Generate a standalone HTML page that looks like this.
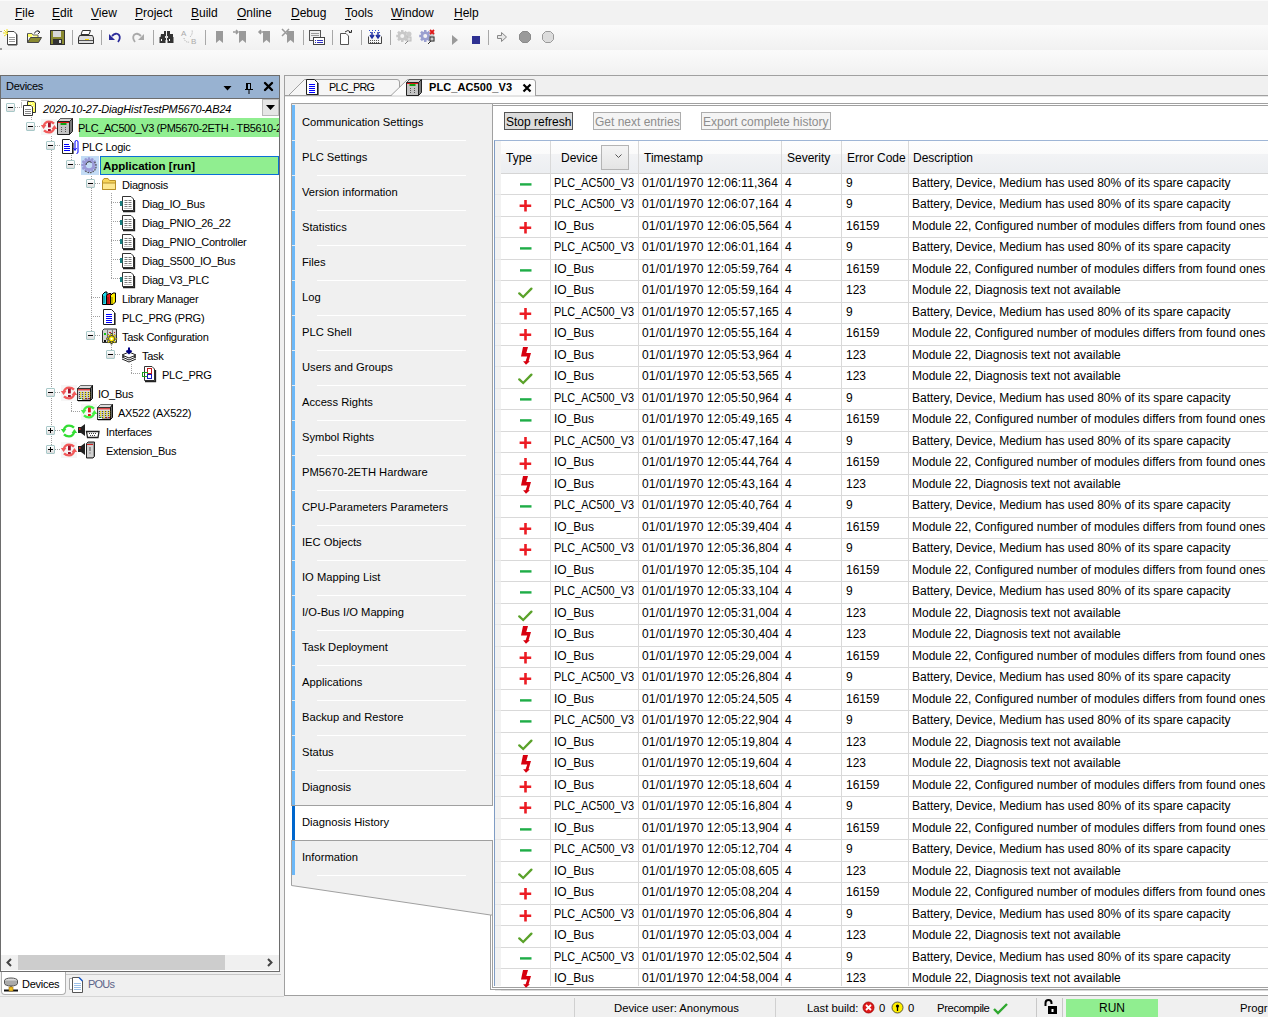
<!DOCTYPE html>
<html><head><meta charset="utf-8"><style>
*{margin:0;padding:0;box-sizing:border-box}
html,body{width:1268px;height:1017px;overflow:hidden;background:#f0f0f0;font-family:"Liberation Sans",sans-serif;color:#000}
.abs{position:absolute}
#menu{position:absolute;left:0;top:0;width:1268px;height:25px;background:#f2f2f2;border-top:1px solid #fafafa}
#menu span{position:absolute;top:5px;font-size:12px}
#menu span u{text-decoration:underline;text-underline-offset:2px}
#tb1{position:absolute;left:0;top:25px;width:1268px;height:25px;background:linear-gradient(#fbfbfb,#f1f1f1)}
#tb2{position:absolute;left:0;top:50px;width:1268px;height:25px;background:linear-gradient(#fbfbfb,#f1f1f1)}
.sep{position:absolute;top:30px;width:1px;height:15px;background:#a8a8a8}
.ic{position:absolute;overflow:visible}
#dev{position:absolute;left:0;top:75px;width:280px;height:897px;border:1px solid #6d6d6d;background:#fff;overflow:hidden}
#devhdr{position:absolute;left:0;top:0;width:278px;height:23px;background:#98b2d1;border-bottom:1px solid #6d6d6d}
#devhdr span{position:absolute;left:5px;top:4px;font-size:11px;letter-spacing:-0.3px}
.tt{position:absolute;font-size:11px;line-height:19px;white-space:nowrap;color:#000;letter-spacing:-0.25px}
.tt.it{font-style:italic;letter-spacing:-0.15px}
.tt.bd{font-weight:bold;font-size:11.5px;letter-spacing:0}
.dv{position:absolute;width:1px;background:repeating-linear-gradient(#a0a0a0 0 1px,transparent 1px 2px)}
.dh{position:absolute;height:1px;background:repeating-linear-gradient(90deg,#a0a0a0 0 1px,transparent 1px 2px)}
.exp{position:absolute;width:9px;height:9px;border:1px solid #a8c8c8;background:linear-gradient(#fff,#ddd);border-radius:1px}
.exp i{position:absolute;left:1px;top:3px;width:5px;height:1px;background:#000}
.exp em{position:absolute;left:3px;top:1px;width:1px;height:5px;background:#000}
#editor{position:absolute;left:284px;top:75px;width:990px;height:921px;border:1px solid #a0a0a0;background:#fff}
#tabstrip{position:absolute;left:285px;top:76px;width:990px;height:20px;background:#f0f0f0;border-bottom:1px solid #a0a0a0}
.st{position:absolute;left:302px;font-size:11.2px;white-space:nowrap;line-height:13px}
.si b{position:absolute;left:1px;top:0;width:3px;height:35px;background:#6cb8f8}
.si span{position:absolute;left:11px;top:10px;font-size:11.2px;white-space:nowrap}
.si u{position:absolute;left:26px;top:35px;width:150px;height:1px;background:#fff}
.si.sel{background:#fff;border-top:1px solid #a0a0a0;border-bottom:1px solid #a0a0a0;width:203px}
.si.sel b{background:#0066cc;top:-1px}
.si.sel span{top:9px}
.tr{position:absolute;left:0;top:0;width:1268px;height:21.5px}
.tr span{position:absolute;top:2px;font-size:12px;white-space:nowrap}
.hl{position:absolute;left:501px;width:780px;height:1px;background:#d9d9d9}
.hl2{position:absolute;left:495px;width:6px;height:1px;background:#e6e6e6}
.vl{position:absolute;top:141px;width:1px;height:845px;background:#d9d9d9}
.hd{position:absolute;top:151px;font-size:12px;white-space:nowrap}
#status span{position:absolute;top:1002px;font-size:11.3px;white-space:nowrap}
.btn{position:absolute;top:112px;height:18px;font-size:12px;padding:2px 1px 0 1px;line-height:14px;white-space:nowrap;border:1px solid #adadad;color:#8d8d8d;background:#f4f4f4}
</style></head><body>
<div id="menu">
<span style="left:15px"><u>F</u>ile</span>
<span style="left:52px"><u>E</u>dit</span>
<span style="left:91px"><u>V</u>iew</span>
<span style="left:135px"><u>P</u>roject</span>
<span style="left:191px"><u>B</u>uild</span>
<span style="left:237px"><u>O</u>nline</span>
<span style="left:291px"><u>D</u>ebug</span>
<span style="left:345px"><u>T</u>ools</span>
<span style="left:391px"><u>W</u>indow</span>
<span style="left:454px"><u>H</u>elp</span>
</div>
<div id="tb1"></div>
<div id="tb2"></div>
<!-- toolbar icons placeholder -->
<svg class="ic" style="left:3px;top:29px" width="16" height="17" viewBox="0 0 16 17"><path d="M4.5 2.5H11L13.5 5V15.5H4.5Z" fill="#fff" stroke="#444"/><path d="M5 16H14V5.5" stroke="#444" fill="none"/><path d="M6 8.5h6M6 10.5h6M6 12.5h6" stroke="#999"/><path d="M1 1L5 5M4 0v4M0 4h4M1 7l3-2" stroke="#f0e020" stroke-width="1"/></svg>
<svg class="ic" style="left:26px;top:29px" width="16" height="16" viewBox="0 0 16 16"><path d="M1.5 4.5H6L7 6H12V9" fill="#ffff80" stroke="#666"/><path d="M1.5 4.5V13.5H12.5L15.5 8.5H4.5L1.5 13.5" fill="#8a8a30" stroke="#444"/><path d="M2 5h4v3h-4z" fill="#ffff66"/><path d="M8.5 4.5 Q9.5 1 13 2.5" stroke="#333" fill="none"/><path d="M11.5 1.5L14 3L12 5" stroke="#333" fill="none"/></svg>
<svg class="ic" style="left:50px;top:30px" width="15" height="15" viewBox="0 0 15 15"><rect x="0.5" y="0.5" width="14" height="14" fill="#8a8a30" stroke="#333"/><rect x="3" y="1" width="8" height="6" fill="#d8d8d8"/><rect x="3" y="9" width="9" height="5" fill="#333"/><rect x="9" y="10" width="2" height="3" fill="#ddd"/></svg>
<svg class="ic" style="left:78px;top:30px" width="16" height="15" viewBox="0 0 16 15"><path d="M4.5 0.5H12.5L11 4.5H3Z" fill="#fff" stroke="#333"/><path d="M1.5 5.5H14.5L15.5 8V13.5H0.5V8Z" fill="#ddd" stroke="#333"/><path d="M1 10.5H15" stroke="#555"/><rect x="7" y="9" width="4" height="1" fill="#f0d000"/></svg>
<svg class="ic" style="left:108px;top:31px" width="14" height="13" viewBox="0 0 14 13"><path d="M4 5 Q8 1 11 4 Q13 7 10 11" stroke="#2b2b9a" stroke-width="1.8" fill="none"/><path d="M1 3V9H7Z" fill="#2b2b9a"/></svg>
<svg class="ic" style="left:131px;top:31px" width="14" height="13" viewBox="0 0 14 13"><path d="M10 5 Q6 1 3 4 Q1 7 4 11" stroke="#aaa" stroke-width="1.8" fill="none"/><path d="M13 3V9H7Z" fill="#aaa"/></svg>
<svg class="ic" style="left:159px;top:30px" width="15" height="14" viewBox="0 0 15 14"><path d="M2 4h3v-3h2v9h-6z M9 1h2v3h3v6h-6v-9z" fill="#333"/><rect x="0.5" y="7" width="6" height="6" fill="#333"/><rect x="8.5" y="7" width="6" height="6" fill="#333"/><rect x="2" y="9" width="1" height="2" fill="#fff"/><rect x="10" y="9" width="1" height="2" fill="#fff"/><rect x="6" y="6" width="3" height="2" fill="#ddd"/></svg>
<svg class="ic" style="left:181px;top:29px" width="17" height="16" viewBox="0 0 17 16"><text x="0" y="7" font-size="8" fill="#aaa" font-family="Liberation Sans">A</text><text x="10" y="15" font-size="8" fill="#aaa" font-family="Liberation Sans">B</text><path d="M3 9 Q4 14 9 13 M9 8 Q12 5 11 1" stroke="#aaa" stroke-dasharray="1 1" fill="none"/></svg>
<svg class="ic" style="left:212px;top:29px" width="15" height="16" viewBox="0 0 15 16"><path d="M4 2H11V14L7.5 11L4 14Z" fill="#9a9a9a"/></svg>
<svg class="ic" style="left:233px;top:28px" width="15" height="16" viewBox="0 0 15 16"><path d="M6 3H13V15L9.5 12L6 15Z" fill="#9a9a9a"/><path d="M0 4H5M3 2L5 4L3 6" stroke="#9a9a9a" stroke-width="1.5" fill="none"/></svg>
<svg class="ic" style="left:257px;top:28px" width="15" height="16" viewBox="0 0 15 16"><path d="M6 3H13V15L9.5 12L6 15Z" fill="#9a9a9a"/><path d="M8 4H2M4 2L2 4L4 6" stroke="#9a9a9a" stroke-width="1.5" fill="none"/></svg>
<svg class="ic" style="left:281px;top:28px" width="15" height="16" viewBox="0 0 15 16"><path d="M6 3H13V15L9.5 12L6 15Z" fill="#9a9a9a"/><path d="M1 1L8 8M8 1L1 8" stroke="#9a9a9a" stroke-width="1.5" fill="none"/></svg>
<svg class="ic" style="left:309px;top:29px" width="16" height="16" viewBox="0 0 16 16"><rect x="0.5" y="1.5" width="11" height="10" fill="#eee" stroke="#555"/><path d="M2 4.5h8M2 6.5h8" stroke="#999"/><rect x="4.5" y="8.5" width="11" height="7" fill="#fff" stroke="#444"/><path d="M6 11.5h1M8 11.5h6M6 13.5h1M8 13.5h6" stroke="#3030c0"/></svg>
<svg class="ic" style="left:339px;top:29px" width="14" height="16" viewBox="0 0 14 16"><path d="M1.5 4.5H7L9.5 7V15.5H1.5Z" fill="#fff" stroke="#555"/><path d="M6 3 Q9 0 11.5 3" stroke="#333" fill="none"/><path d="M10 3.5h2.5v-2.5" stroke="#333" fill="none"/></svg>
<svg class="ic" style="left:367px;top:29px" width="16" height="16" viewBox="0 0 16 16"><path d="M1.5 7.5V14.5H14.5V7.5" fill="none" stroke="#444"/><path d="M3 11.5h1M5 11.5h1M7 11.5h1M9 11.5h1M11 11.5h1M3 13.5h1M5 13.5h1M7 13.5h1M9 13.5h1M11 13.5h1" stroke="#555"/><path d="M2 1.5h1M5 1.5h1M8 1.5h1M11 1.5h1M3 3.5h1M7 3.5h1M12 3.5h1" stroke="#3050d0"/><path d="M5 3v5M3 6l2 3l2-3M11 3v5M9 6l2 3l2-3" stroke="#2030a0" stroke-width="1.5" fill="none"/></svg>
<svg class="ic" style="left:396px;top:29px" width="16" height="16" viewBox="0 0 16 16"><rect x="5" y="1" width="2.5" height="3" fill="#c8c8c8" transform="rotate(0 6.25 7)"/><rect x="5" y="1" width="2.5" height="3" fill="#c8c8c8" transform="rotate(45 6.25 7)"/><rect x="5" y="1" width="2.5" height="3" fill="#c8c8c8" transform="rotate(90 6.25 7)"/><rect x="5" y="1" width="2.5" height="3" fill="#c8c8c8" transform="rotate(135 6.25 7)"/><rect x="5" y="1" width="2.5" height="3" fill="#c8c8c8" transform="rotate(180 6.25 7)"/><rect x="5" y="1" width="2.5" height="3" fill="#c8c8c8" transform="rotate(225 6.25 7)"/><rect x="5" y="1" width="2.5" height="3" fill="#c8c8c8" transform="rotate(270 6.25 7)"/><rect x="5" y="1" width="2.5" height="3" fill="#c8c8c8" transform="rotate(315 6.25 7)"/><circle cx="6.25" cy="7" r="4.6" fill="#c8c8c8"/><circle cx="6.25" cy="7" r="2" fill="#f4f4f4"/><circle cx="13" cy="5" r="2.5" fill="#ccc"/><rect x="11" y="8" width="4" height="4" fill="#ddd" stroke="#bbb"/><path d="M9 15L12 12" stroke="#888"/></svg>
<svg class="ic" style="left:419px;top:29px" width="16" height="16" viewBox="0 0 16 16"><rect x="5" y="1" width="2.5" height="3" fill="#9a9fd0" transform="rotate(0 6.25 7)"/><rect x="5" y="1" width="2.5" height="3" fill="#9a9fd0" transform="rotate(45 6.25 7)"/><rect x="5" y="1" width="2.5" height="3" fill="#9a9fd0" transform="rotate(90 6.25 7)"/><rect x="5" y="1" width="2.5" height="3" fill="#9a9fd0" transform="rotate(135 6.25 7)"/><rect x="5" y="1" width="2.5" height="3" fill="#9a9fd0" transform="rotate(180 6.25 7)"/><rect x="5" y="1" width="2.5" height="3" fill="#9a9fd0" transform="rotate(225 6.25 7)"/><rect x="5" y="1" width="2.5" height="3" fill="#9a9fd0" transform="rotate(270 6.25 7)"/><rect x="5" y="1" width="2.5" height="3" fill="#9a9fd0" transform="rotate(315 6.25 7)"/><circle cx="6.25" cy="7" r="4.6" fill="#9a9fd0"/><circle cx="6.25" cy="7" r="2" fill="#f4f4f4"/><circle cx="13" cy="5" r="2.5" fill="#ccc"/><rect x="11" y="8" width="4" height="4" fill="#ddd" stroke="#bbb"/><path d="M9 15L12 12" stroke="#888"/><path d="M11 1L15 5M15 1L11 5" stroke="#e01818" stroke-width="1.8"/><rect x="11" y="8" width="4" height="4" fill="#ccc" stroke="#333"/><path d="M9 15L12 12" stroke="#333"/></svg>
<svg class="ic" style="left:452px;top:35px" width="6" height="10" viewBox="0 0 6 10"><path d="M0 0L6 5L0 10Z" fill="#9a9a9a"/></svg>
<svg class="ic" style="left:472px;top:36px" width="9" height="9" viewBox="0 0 9 9"><rect width="8" height="8" fill="#2e3192"/></svg>
<svg class="ic" style="left:497px;top:32px" width="10" height="10" viewBox="0 0 10 10"><path d="M0.5 3.5H4.5V0.5L9.5 5L4.5 9.5V6.5H0.5Z" fill="#e8e8e8" stroke="#888"/></svg>
<svg class="ic" style="left:519px;top:31px" width="12" height="12" viewBox="0 0 12 12"><path d="M3.5 0.5H8.5L11.5 3.5V8.5L8.5 11.5H3.5L0.5 8.5V3.5Z" fill="#9a9a9a" stroke="#8a8a8a"/></svg>
<svg class="ic" style="left:542px;top:31px" width="12" height="12" viewBox="0 0 12 12"><path d="M3.5 0.5H8.5L11.5 3.5V8.5L8.5 11.5H3.5L0.5 8.5V3.5Z" fill="#dcdcdc" stroke="#9a9a9a"/></svg>
<div class="sep" style="left:72px"></div>
<div class="sep" style="left:101px"></div>
<div class="sep" style="left:153px"></div>
<div class="sep" style="left:205px"></div>
<div class="sep" style="left:303px"></div>
<div class="sep" style="left:332px"></div>
<div class="sep" style="left:361px"></div>
<div class="sep" style="left:390px"></div>
<div class="sep" style="left:488px"></div>
<div style="position:absolute;left:0;top:31px;width:2px;height:1px;background:#999"></div>
<div style="position:absolute;left:0;top:48px;width:2px;height:2px;background:#999"></div>

<div id="dev">
<div id="devhdr"><span>Devices</span>
<svg style="position:absolute;left:222px;top:10px" width="10" height="6"><path d="M0.5 0H8.5L4.5 4.5Z" fill="#000"/></svg>
<svg style="position:absolute;left:243px;top:6px" width="10" height="12"><path d="M2 1H7V7H9V8H5.5V12H4.5V8H1V7H2Z" fill="#000"/><rect x="4" y="2" width="2" height="5" fill="#9bb7d6"/></svg>
<svg style="position:absolute;left:262px;top:5px" width="11" height="11"><path d="M2 2L9 9M9 2L2 9" stroke="#000" stroke-width="2.4" stroke-linecap="round"/></svg>
</div>
</div>
<div style="position:absolute;left:0;top:0;width:279px;height:955px;overflow:hidden">
<div class="dv" style="left:51px;top:136px;height:313px"></div>
<div class="dv" style="left:71px;top:155px;height:9px"></div>
<div class="dv" style="left:91px;top:174px;height:161px"></div>
<div class="dv" style="left:111px;top:193px;height:85px"></div>
<div class="dv" style="left:111px;top:345px;height:9px"></div>
<div class="dv" style="left:131px;top:364px;height:9px"></div>
<div class="dv" style="left:71px;top:402px;height:9px"></div>
<div class="dv" style="left:31px;top:117px;height:4px"></div>
<div class="dh" style="left:15px;top:107px;width:6px"></div>
<div class="dh" style="left:35px;top:126px;width:6px"></div>
<div class="dh" style="left:55px;top:145px;width:6px"></div>
<div class="dh" style="left:75px;top:164px;width:6px"></div>
<div class="dh" style="left:95px;top:183px;width:6px"></div>
<div class="dh" style="left:111px;top:202px;width:10px"></div>
<div class="dh" style="left:111px;top:221px;width:10px"></div>
<div class="dh" style="left:111px;top:240px;width:10px"></div>
<div class="dh" style="left:111px;top:259px;width:10px"></div>
<div class="dh" style="left:111px;top:278px;width:10px"></div>
<div class="dh" style="left:91px;top:297px;width:10px"></div>
<div class="dh" style="left:91px;top:316px;width:10px"></div>
<div class="dh" style="left:95px;top:335px;width:6px"></div>
<div class="dh" style="left:115px;top:354px;width:6px"></div>
<div class="dh" style="left:131px;top:373px;width:10px"></div>
<div class="dh" style="left:55px;top:392px;width:6px"></div>
<div class="dh" style="left:71px;top:411px;width:10px"></div>
<div class="dh" style="left:55px;top:430px;width:6px"></div>
<div class="dh" style="left:55px;top:449px;width:6px"></div>
<div class="exp" style="left:6px;top:103px"><i></i></div>
<div class="tt it" style="left:43px;top:100px">2020-10-27-DiagHistTestPM5670-AB24</div>
<div style="position:absolute;left:79px;top:118px;width:200px;height:19px;background:#90ee90"></div>
<div class="exp" style="left:26px;top:122px"><i></i></div>
<div class="tt" style="left:78px;top:119px;letter-spacing:-0.4px">PLC_AC500_V3 (PM5670-2ETH - TB5610-2ETH)</div>
<div class="exp" style="left:46px;top:141px"><i></i></div>
<div class="tt" style="left:82px;top:138px">PLC Logic</div>
<div style="position:absolute;left:81px;top:156px;width:18px;height:19px;background:#c3dcf5"></div>
<div style="position:absolute;left:100px;top:156px;width:179px;height:19px;background:#90ee90;border:1px solid #0a6fd6"></div>
<div class="exp" style="left:66px;top:160px"><i></i></div>
<div class="tt bd" style="left:103px;top:157px">Application [run]</div>
<div class="exp" style="left:86px;top:179px"><i></i></div>
<div class="tt" style="left:122px;top:176px">Diagnosis</div>
<div class="tt" style="left:142px;top:195px">Diag_IO_Bus</div>
<div class="tt" style="left:142px;top:214px">Diag_PNIO_26_22</div>
<div class="tt" style="left:142px;top:233px">Diag_PNIO_Controller</div>
<div class="tt" style="left:142px;top:252px">Diag_S500_IO_Bus</div>
<div class="tt" style="left:142px;top:271px">Diag_V3_PLC</div>
<div class="tt" style="left:122px;top:290px">Library Manager</div>
<div class="tt" style="left:122px;top:309px">PLC_PRG (PRG)</div>
<div class="exp" style="left:86px;top:331px"><i></i></div>
<div class="tt" style="left:122px;top:328px">Task Configuration</div>
<div class="exp" style="left:106px;top:350px"><i></i></div>
<div class="tt" style="left:142px;top:347px">Task</div>
<div class="tt" style="left:162px;top:366px">PLC_PRG</div>
<div class="exp" style="left:46px;top:388px"><i></i></div>
<div class="tt" style="left:98px;top:385px">IO_Bus</div>
<div class="tt" style="left:118px;top:404px">AX522 (AX522)</div>
<div class="exp" style="left:46px;top:426px"><i></i><em></em></div>
<div class="tt" style="left:106px;top:423px">Interfaces</div>
<div class="exp" style="left:46px;top:445px"><i></i><em></em></div>
<div class="tt" style="left:106px;top:442px">Extension_Bus</div>
<svg class="ic" style="left:21px;top:100px" width="16" height="17" viewBox="0 0 16 17"><path d="M0.5 0.5h1M2.5 0.5h1M4.5 0.5h1M6.5 0.5h1M0.5 2.5v1M0.5 4.5v1M0.5 6.5v1" stroke="#777"/><path d="M6.5 1.5H13L14.5 3V12.5H6.5Z" fill="#ffff66" stroke="#333"/><path d="M8 3.5h1M10 3.5h1M9 5.5h1M11 5.5h1M8 7.5h1M12 7.5h1" stroke="#fff"/><path d="M2.5 5.5H10L11.5 7V15.5H2.5Z" fill="#fff" stroke="#333"/><path d="M4 9.5h6M4 11.5h6M4 13.5h6" stroke="#888"/></svg>
<svg class="ic" style="left:41px;top:119px" width="16" height="16" viewBox="0 0 16 16"><rect width="16" height="16" fill="#f6f6f6"/><path d="M2.6 7.5 Q3.8 2.6 8 2.6 Q11 2.6 13 4.6" stroke="#f25a5a" stroke-width="2.3" fill="none"/><path d="M-0.2 6 H5.4 L2.6 10Z" fill="#f25a5a"/><path d="M13.4 8.5 Q12.2 13.4 8 13.4 Q5 13.4 3 11.4" stroke="#f25a5a" stroke-width="2.3" fill="none"/><path d="M16.2 10 H10.6 L13.4 6Z" fill="#f25a5a"/><rect x="7" y="3.6" width="2.8" height="4.8" fill="#a5102a"/><rect x="7" y="10" width="2.8" height="2" fill="#a5102a"/></svg>
<svg class="ic" style="left:57px;top:118px" width="17" height="18" viewBox="0 0 17 18"><path d="M0.5 3.5 L3.5 0.5 H15.5 V13.5 L12.5 16.5 H0.5Z" fill="#7a7a7a" stroke="#222"/><path d="M3.5 0.5 H15.5 L12.5 3.5 H0.5Z" fill="#d0d0d0" stroke="#444" stroke-width="0.6"/><rect x="1" y="4" width="11" height="12" fill="#c4c4c4"/><rect x="1" y="4" width="11" height="1" fill="#e01818"/><rect x="3.5" y="5" width="6" height="2" fill="#11a011"/><path d="M4 9.5h1M8 9.5h1M4 11.5h1M8 11.5h1M4 13.5h1M8 13.5h1" stroke="#555"/><path d="M0.5 3.5 H12.5 V16.5 M12.5 3.5 L15.5 0.5" stroke="#222" fill="none"/></svg>
<svg class="ic" style="left:61px;top:138px" width="18" height="17" viewBox="0 0 18 17"><path d="M1.5 1.5H8.5L11.5 4.5V15.5H1.5Z" fill="#fff" stroke="#222"/><path d="M2 15.5H12V5" stroke="#222" stroke-width="1.2" fill="none"/><path d="M3 6.5h5M3 8.5h6M3 10.5h6M3 12.5h6" stroke="#0000ff"/><path d="M15.5 2.5 A1.5 1.5 0 0 1 17 4 V14 A1.5 1.5 0 0 1 15.5 15.5 M15.5 2.5 A1.5 1.5 0 0 0 14 4 V11" stroke="#0000ff" fill="none"/><path d="M12.5 10 L14 12.5 L15.5 10" stroke="#0000ff" fill="none"/></svg>
<svg class="ic" style="left:81px;top:157px" width="16" height="16" viewBox="0 0 16 16"><rect x="6.8" y="0.3" width="2.4" height="3" fill="#9999d6" transform="rotate(0 8 8)"/><rect x="6.8" y="0.3" width="2.4" height="3" fill="#9999d6" transform="rotate(30 8 8)"/><rect x="6.8" y="0.3" width="2.4" height="3" fill="#9999d6" transform="rotate(60 8 8)"/><rect x="6.8" y="0.3" width="2.4" height="3" fill="#9999d6" transform="rotate(90 8 8)"/><rect x="6.8" y="0.3" width="2.4" height="3" fill="#9999d6" transform="rotate(120 8 8)"/><rect x="6.8" y="0.3" width="2.4" height="3" fill="#9999d6" transform="rotate(150 8 8)"/><rect x="6.8" y="0.3" width="2.4" height="3" fill="#9999d6" transform="rotate(180 8 8)"/><rect x="6.8" y="0.3" width="2.4" height="3" fill="#9999d6" transform="rotate(210 8 8)"/><rect x="6.8" y="0.3" width="2.4" height="3" fill="#9999d6" transform="rotate(240 8 8)"/><rect x="6.8" y="0.3" width="2.4" height="3" fill="#9999d6" transform="rotate(270 8 8)"/><rect x="6.8" y="0.3" width="2.4" height="3" fill="#9999d6" transform="rotate(300 8 8)"/><rect x="6.8" y="0.3" width="2.4" height="3" fill="#9999d6" transform="rotate(330 8 8)"/><circle cx="8" cy="8" r="6" fill="#9b9bd8"/><path d="M13.5 5 A6.3 6.3 0 0 1 4 13.5" stroke="#555" stroke-width="1.2" fill="none" stroke-dasharray="1.5 1"/><circle cx="8" cy="8" r="3.2" fill="#c3dcf5"/><path d="M5 8 A3.3 3.3 0 0 1 10.5 5.5" stroke="#333" stroke-width="1" fill="none"/></svg>
<svg class="ic" style="left:101px;top:176px" width="16" height="16" viewBox="0 0 16 16"><path d="M1.5 4.5 L3 2.5 H7 L8.5 4.5 H14.5 V13.5 H1.5Z" fill="#f7d55a" stroke="#b8902a"/><path d="M1.5 7 H14.5 V13.5 H1.5Z" fill="#fde891" stroke="#b8902a"/></svg>
<svg class="ic" style="left:120px;top:196px" width="16" height="17" viewBox="0 0 16 17"><path d="M2.5 0.5H11L13.5 3V14.5H2.5Z" fill="#fff" stroke="#333"/><path d="M3 15.5H14.5V4" stroke="#222" stroke-width="1.3" fill="none"/><rect x="0" y="5" width="2.5" height="5" fill="#188080"/><path d="M4.5 4.5h3M8.5 4.5h3M4.5 6.5h3M8.5 6.5h3M4.5 8.5h3M8.5 8.5h3M4.5 10.5h3M8.5 10.5h3" stroke="#7a7a7a"/><path d="M4 12.5h8" stroke="#bbb"/></svg>
<svg class="ic" style="left:120px;top:215px" width="16" height="17" viewBox="0 0 16 17"><path d="M2.5 0.5H11L13.5 3V14.5H2.5Z" fill="#fff" stroke="#333"/><path d="M3 15.5H14.5V4" stroke="#222" stroke-width="1.3" fill="none"/><rect x="0" y="5" width="2.5" height="5" fill="#188080"/><path d="M4.5 4.5h3M8.5 4.5h3M4.5 6.5h3M8.5 6.5h3M4.5 8.5h3M8.5 8.5h3M4.5 10.5h3M8.5 10.5h3" stroke="#7a7a7a"/><path d="M4 12.5h8" stroke="#bbb"/></svg>
<svg class="ic" style="left:120px;top:234px" width="16" height="17" viewBox="0 0 16 17"><path d="M2.5 0.5H11L13.5 3V14.5H2.5Z" fill="#fff" stroke="#333"/><path d="M3 15.5H14.5V4" stroke="#222" stroke-width="1.3" fill="none"/><rect x="0" y="5" width="2.5" height="5" fill="#188080"/><path d="M4.5 4.5h3M8.5 4.5h3M4.5 6.5h3M8.5 6.5h3M4.5 8.5h3M8.5 8.5h3M4.5 10.5h3M8.5 10.5h3" stroke="#7a7a7a"/><path d="M4 12.5h8" stroke="#bbb"/></svg>
<svg class="ic" style="left:120px;top:253px" width="16" height="17" viewBox="0 0 16 17"><path d="M2.5 0.5H11L13.5 3V14.5H2.5Z" fill="#fff" stroke="#333"/><path d="M3 15.5H14.5V4" stroke="#222" stroke-width="1.3" fill="none"/><rect x="0" y="5" width="2.5" height="5" fill="#188080"/><path d="M4.5 4.5h3M8.5 4.5h3M4.5 6.5h3M8.5 6.5h3M4.5 8.5h3M8.5 8.5h3M4.5 10.5h3M8.5 10.5h3" stroke="#7a7a7a"/><path d="M4 12.5h8" stroke="#bbb"/></svg>
<svg class="ic" style="left:120px;top:272px" width="16" height="17" viewBox="0 0 16 17"><path d="M2.5 0.5H11L13.5 3V14.5H2.5Z" fill="#fff" stroke="#333"/><path d="M3 15.5H14.5V4" stroke="#222" stroke-width="1.3" fill="none"/><rect x="0" y="5" width="2.5" height="5" fill="#188080"/><path d="M4.5 4.5h3M8.5 4.5h3M4.5 6.5h3M8.5 6.5h3M4.5 8.5h3M8.5 8.5h3M4.5 10.5h3M8.5 10.5h3" stroke="#7a7a7a"/><path d="M4 12.5h8" stroke="#bbb"/></svg>
<svg class="ic" style="left:101px;top:290px" width="16" height="16" viewBox="0 0 16 16"><path d="M1.5 4.5 L4 2 L6 2 L6 14.5 H1.5Z" fill="#22d8e8" stroke="#000"/><path d="M5.5 5.5 L8 3.5 H10 V14.5 H5.5Z" fill="#e81818" stroke="#000"/><path d="M9.5 5.5 L12 3 H14.5 V12 L12 14.5 H9.5Z" fill="#ffee00" stroke="#000"/><path d="M3 6v7M7 7v7M11 7v7" stroke="#000" stroke-opacity="0.5"/></svg>
<svg class="ic" style="left:102px;top:309px" width="14" height="17" viewBox="0 0 14 17"><path d="M1.5 0.5H9.5L12.5 3.5V15.5H1.5Z" fill="#fff" stroke="#222"/><path d="M2 15.5H13V4" stroke="#222" stroke-width="1.2" fill="none"/><path d="M4 5.5h6M4 7.5h6M4 9.5h6M4 11.5h6M4 13.5h6" stroke="#0000ff" stroke-width="1"/></svg>
<svg class="ic" style="left:101px;top:328px" width="16" height="17" viewBox="0 0 16 17"><path d="M1.5 2.5 L3 1 H15.5 V14.5 H1.5Z" fill="#d4d4d4" stroke="#333"/><path d="M6.5 1.5v13M11.5 1.5v13" stroke="#777"/><rect x="3" y="5" width="2" height="2" fill="#11c011"/><rect x="3" y="12" width="2" height="2" fill="#111"/><path d="M8 4.5h2M13 4.5h1" stroke="#c02020"/><rect x="9.8" y="5.5" width="1.6" height="2.4" fill="#ffee00" stroke="#333" stroke-width="0.5" transform="rotate(0 10.6 10.8)"/><rect x="9.8" y="5.5" width="1.6" height="2.4" fill="#ffee00" stroke="#333" stroke-width="0.5" transform="rotate(45 10.6 10.8)"/><rect x="9.8" y="5.5" width="1.6" height="2.4" fill="#ffee00" stroke="#333" stroke-width="0.5" transform="rotate(90 10.6 10.8)"/><rect x="9.8" y="5.5" width="1.6" height="2.4" fill="#ffee00" stroke="#333" stroke-width="0.5" transform="rotate(135 10.6 10.8)"/><rect x="9.8" y="5.5" width="1.6" height="2.4" fill="#ffee00" stroke="#333" stroke-width="0.5" transform="rotate(180 10.6 10.8)"/><rect x="9.8" y="5.5" width="1.6" height="2.4" fill="#ffee00" stroke="#333" stroke-width="0.5" transform="rotate(225 10.6 10.8)"/><rect x="9.8" y="5.5" width="1.6" height="2.4" fill="#ffee00" stroke="#333" stroke-width="0.5" transform="rotate(270 10.6 10.8)"/><rect x="9.8" y="5.5" width="1.6" height="2.4" fill="#ffee00" stroke="#333" stroke-width="0.5" transform="rotate(315 10.6 10.8)"/><circle cx="10.6" cy="10.8" r="3" fill="#ffee00" stroke="#333" stroke-width="0.8"/><circle cx="10.6" cy="10.8" r="1.1" fill="#fff"/></svg>
<svg class="ic" style="left:121px;top:347px" width="16" height="16" viewBox="0 0 16 16"><path d="M1 10 L8 7 L15 10 L8 13Z" fill="#fff" stroke="#222"/><path d="M1 12 L8 15 L15 12" stroke="#222" fill="none"/><path d="M1 8 L8 5 L15 8 L8 11Z" fill="#fff" stroke="#222"/><path d="M8 0.5v5M5.5 3.5L8 6L10.5 3.5" stroke="#000080" stroke-width="2" fill="none"/></svg>
<svg class="ic" style="left:141px;top:366px" width="16" height="16" viewBox="0 0 16 16"><path d="M3.5 0.5H11L13.5 3V14.5H3.5Z" fill="#fff" stroke="#333"/><path d="M4 15.5H14.5V4" stroke="#222" stroke-width="1.3" fill="none"/><rect x="6.5" y="2.5" width="4" height="5" fill="none" stroke="#c01818"/><rect x="1.5" y="6.5" width="5" height="4" fill="none" stroke="#18a018"/><rect x="6.5" y="8.5" width="4" height="4" fill="none" stroke="#1818c0"/></svg>
<svg class="ic" style="left:61px;top:385px" width="16" height="16" viewBox="0 0 16 16"><rect width="16" height="16" fill="#f6f6f6"/><path d="M2.6 7.5 Q3.8 2.6 8 2.6 Q11 2.6 13 4.6" stroke="#f25a5a" stroke-width="2.3" fill="none"/><path d="M-0.2 6 H5.4 L2.6 10Z" fill="#f25a5a"/><path d="M13.4 8.5 Q12.2 13.4 8 13.4 Q5 13.4 3 11.4" stroke="#f25a5a" stroke-width="2.3" fill="none"/><path d="M16.2 10 H10.6 L13.4 6Z" fill="#f25a5a"/><rect x="7" y="3.6" width="2.8" height="4.8" fill="#a5102a"/><rect x="7" y="10" width="2.8" height="2" fill="#a5102a"/></svg>
<svg class="ic" style="left:76px;top:384px" width="17" height="18" viewBox="0 0 17 18"><path d="M1.5 4.5 L4.5 1.5 H16.5 L14.5 4.5Z" fill="#dcdcdc" stroke="#444" stroke-width="0.8"/><rect x="1.5" y="4.5" width="13" height="12" fill="#c9c9c9" stroke="#333"/><path d="M14.5 4.5 L16.5 1.5 V14.5 L14.5 16.5Z" fill="#6a6a6a" stroke="#111"/><path d="M2 16.5 H14.5" stroke="#000" stroke-width="1.5"/><rect x="2" y="5.3" width="12" height="1.3" fill="#e01010"/><rect x="2" y="6.6" width="12" height="0.8" fill="#f4f4f4"/><rect x="3" y="8" width="1" height="1" fill="#445"/><rect x="4" y="8" width="1.2" height="1.2" fill="#f0e000"/><rect x="6" y="8" width="1" height="1" fill="#445"/><rect x="7" y="8" width="1.2" height="1.2" fill="#f0e000"/><rect x="9" y="8" width="1" height="1" fill="#445"/><rect x="10" y="8" width="1.2" height="1.2" fill="#f0e000"/><rect x="12" y="8" width="1" height="1" fill="#445"/><rect x="13" y="8" width="1.2" height="1.2" fill="#f0e000"/><rect x="3" y="10" width="1" height="1" fill="#445"/><rect x="4" y="10" width="1.2" height="1.2" fill="#f0e000"/><rect x="6" y="10" width="1" height="1" fill="#445"/><rect x="7" y="10" width="1.2" height="1.2" fill="#f0e000"/><rect x="9" y="10" width="1" height="1" fill="#445"/><rect x="10" y="10" width="1.2" height="1.2" fill="#f0e000"/><rect x="12" y="10" width="1" height="1" fill="#445"/><rect x="13" y="10" width="1.2" height="1.2" fill="#f0e000"/><rect x="3" y="12" width="1" height="1" fill="#445"/><rect x="4" y="12" width="1.2" height="1.2" fill="#f0e000"/><rect x="6" y="12" width="1" height="1" fill="#445"/><rect x="7" y="12" width="1.2" height="1.2" fill="#f0e000"/><rect x="9" y="12" width="1" height="1" fill="#445"/><rect x="10" y="12" width="1.2" height="1.2" fill="#f0e000"/><rect x="12" y="12" width="1" height="1" fill="#445"/><rect x="13" y="12" width="1.2" height="1.2" fill="#f0e000"/><rect x="3" y="14" width="1" height="1" fill="#445"/><rect x="4" y="14" width="1.2" height="1.2" fill="#10a010"/><rect x="6" y="14" width="1" height="1" fill="#445"/><rect x="7" y="14" width="1.2" height="1.2" fill="#f0e000"/><rect x="9" y="14" width="1" height="1" fill="#445"/><rect x="10" y="14" width="1.2" height="1.2" fill="#c01010"/><rect x="12" y="14" width="1" height="1" fill="#445"/><rect x="13" y="14" width="1.2" height="1.2" fill="#c01010"/><rect x="2" y="15" width="4" height="1" fill="#fff"/></svg>
<svg class="ic" style="left:81px;top:404px" width="16" height="16" viewBox="0 0 16 16"><rect width="16" height="16" fill="#f6f6f6"/><path d="M2.6 7.5 Q3.8 2.6 8 2.6 Q11 2.6 13 4.6" stroke="#44ee44" stroke-width="2.3" fill="none"/><path d="M-0.2 6 H5.4 L2.6 10Z" fill="#44ee44"/><path d="M13.4 8.5 Q12.2 13.4 8 13.4 Q5 13.4 3 11.4" stroke="#44ee44" stroke-width="2.3" fill="none"/><path d="M16.2 10 H10.6 L13.4 6Z" fill="#44ee44"/><rect x="7" y="3.6" width="2.8" height="4.8" fill="#e01818"/><rect x="7" y="10" width="2.8" height="2" fill="#e01818"/></svg>
<svg class="ic" style="left:96px;top:403px" width="17" height="18" viewBox="0 0 17 18"><path d="M1.5 4.5 L4.5 1.5 H16.5 L14.5 4.5Z" fill="#dcdcdc" stroke="#444" stroke-width="0.8"/><rect x="1.5" y="4.5" width="13" height="12" fill="#c9c9c9" stroke="#333"/><path d="M14.5 4.5 L16.5 1.5 V14.5 L14.5 16.5Z" fill="#6a6a6a" stroke="#111"/><path d="M2 16.5 H14.5" stroke="#000" stroke-width="1.5"/><rect x="2" y="5.3" width="12" height="1.3" fill="#e01010"/><rect x="2" y="6.6" width="12" height="0.8" fill="#f4f4f4"/><rect x="3" y="8" width="1" height="1" fill="#445"/><rect x="4" y="8" width="1.2" height="1.2" fill="#f0e000"/><rect x="6" y="8" width="1" height="1" fill="#445"/><rect x="7" y="8" width="1.2" height="1.2" fill="#f0e000"/><rect x="9" y="8" width="1" height="1" fill="#445"/><rect x="10" y="8" width="1.2" height="1.2" fill="#f0e000"/><rect x="12" y="8" width="1" height="1" fill="#445"/><rect x="13" y="8" width="1.2" height="1.2" fill="#f0e000"/><rect x="3" y="10" width="1" height="1" fill="#445"/><rect x="4" y="10" width="1.2" height="1.2" fill="#f0e000"/><rect x="6" y="10" width="1" height="1" fill="#445"/><rect x="7" y="10" width="1.2" height="1.2" fill="#f0e000"/><rect x="9" y="10" width="1" height="1" fill="#445"/><rect x="10" y="10" width="1.2" height="1.2" fill="#f0e000"/><rect x="12" y="10" width="1" height="1" fill="#445"/><rect x="13" y="10" width="1.2" height="1.2" fill="#f0e000"/><rect x="3" y="12" width="1" height="1" fill="#445"/><rect x="4" y="12" width="1.2" height="1.2" fill="#f0e000"/><rect x="6" y="12" width="1" height="1" fill="#445"/><rect x="7" y="12" width="1.2" height="1.2" fill="#f0e000"/><rect x="9" y="12" width="1" height="1" fill="#445"/><rect x="10" y="12" width="1.2" height="1.2" fill="#f0e000"/><rect x="12" y="12" width="1" height="1" fill="#445"/><rect x="13" y="12" width="1.2" height="1.2" fill="#f0e000"/><rect x="3" y="14" width="1" height="1" fill="#445"/><rect x="4" y="14" width="1.2" height="1.2" fill="#10a010"/><rect x="6" y="14" width="1" height="1" fill="#445"/><rect x="7" y="14" width="1.2" height="1.2" fill="#f0e000"/><rect x="9" y="14" width="1" height="1" fill="#445"/><rect x="10" y="14" width="1.2" height="1.2" fill="#c01010"/><rect x="12" y="14" width="1" height="1" fill="#445"/><rect x="13" y="14" width="1.2" height="1.2" fill="#c01010"/><rect x="2" y="15" width="4" height="1" fill="#fff"/></svg>
<svg class="ic" style="left:61px;top:423px" width="16" height="16" viewBox="0 0 16 16"><path d="M2.6 7.5 Q3.8 2.6 8 2.6 Q11 2.6 13 4.6" stroke="#33dd33" stroke-width="2.3" fill="none"/><path d="M-0.2 6 H5.4 L2.6 10Z" fill="#33dd33"/><path d="M13.4 8.5 Q12.2 13.4 8 13.4 Q5 13.4 3 11.4" stroke="#33dd33" stroke-width="2.3" fill="none"/><path d="M16.2 10 H10.6 L13.4 6Z" fill="#33dd33"/></svg>
<svg class="ic" style="left:77px;top:422px" width="23" height="17" viewBox="0 0 23 17"><path d="M1 5h3l4-3v12l-4-3H1Z" fill="#222"/><rect x="2" y="6" width="1.5" height="2" fill="#d02020"/><path d="M9.5 9.5 H22 L21 15.5 H10.5Z" fill="#fff" stroke="#222" stroke-width="1.3"/><path d="M12 11.5h1M14 11.5h1M16 11.5h1M18 11.5h1M13 13.5h1M15 13.5h1M17 13.5h1" stroke="#444"/></svg>
<svg class="ic" style="left:61px;top:442px" width="16" height="16" viewBox="0 0 16 16"><rect width="16" height="16" fill="#f6f6f6"/><path d="M2.6 7.5 Q3.8 2.6 8 2.6 Q11 2.6 13 4.6" stroke="#f25a5a" stroke-width="2.3" fill="none"/><path d="M-0.2 6 H5.4 L2.6 10Z" fill="#f25a5a"/><path d="M13.4 8.5 Q12.2 13.4 8 13.4 Q5 13.4 3 11.4" stroke="#f25a5a" stroke-width="2.3" fill="none"/><path d="M16.2 10 H10.6 L13.4 6Z" fill="#f25a5a"/><rect x="7" y="3.6" width="2.8" height="4.8" fill="#a5102a"/><rect x="7" y="10" width="2.8" height="2" fill="#a5102a"/></svg>
<svg class="ic" style="left:77px;top:441px" width="19" height="17" viewBox="0 0 19 17"><path d="M1 5h3l4-3v12l-4-3H1Z" fill="#222"/><rect x="2" y="6" width="1.5" height="2" fill="#d02020"/><path d="M9.5 2.5 L11 1 H17.5 V15.5 L16 17 H9.5Z" fill="#9a9a9a" stroke="#222"/><rect x="10" y="3" width="6" height="13" fill="#d0d0d0"/><rect x="10" y="3" width="6" height="1" fill="#d02020"/><path d="M12 7h2M12 9h2M12.5 12h1" stroke="#555"/></svg>
</div>
<div style="position:absolute;left:262px;top:99px;width:17px;height:17px;background:#e6e6e6;border:1px solid #b8b8b8"></div>
<svg style="position:absolute;left:266px;top:105px" width="10" height="6"><path d="M0 0H9L4.5 5Z" fill="#000"/></svg>
<!-- devices scrollbar -->
<div style="position:absolute;left:1px;top:955px;width:278px;height:15px;background:#f0f0f0"></div>
<div style="position:absolute;left:18px;top:955px;width:207px;height:15px;background:#cdcdcd"></div>
<svg style="position:absolute;left:5px;top:958px" width="8" height="9"><path d="M6 1L2.5 4.5L6 8" stroke="#444" stroke-width="2" fill="none"/></svg>
<svg style="position:absolute;left:266px;top:958px" width="8" height="9"><path d="M2 1L5.5 4.5L2 8" stroke="#444" stroke-width="2" fill="none"/></svg>
<!-- bottom tabs -->
<div style="position:absolute;left:65px;top:974px;width:216px;height:1px;background:#c8c8c8"></div>
<div style="position:absolute;left:1px;top:972px;width:65px;height:23px;background:#fff;border:1px solid #b0b0b0;border-top:none;border-radius:0 0 4px 4px"></div>
<div style="position:absolute;left:22px;top:978px;font-size:11px;letter-spacing:-0.25px">Devices</div>
<svg style="position:absolute;left:3px;top:977px" width="17" height="16"><ellipse cx="8" cy="3.5" rx="6.5" ry="2.5" fill="#ddd" stroke="#555"/><path d="M1.5 3.5V6.5A6.5 2.5 0 0 0 14.5 6.5V3.5" fill="#aaa" stroke="#555"/><path d="M8 9v3" stroke="#333"/><path d="M1 13.5H15" stroke="#111" stroke-width="2"/><rect x="6" y="10" width="4" height="4" fill="#f0c020" stroke="#a07010" stroke-width="0.6"/></svg>
<div style="position:absolute;left:88px;top:978px;font-size:11px;letter-spacing:-0.8px;color:#5c6488">POUs</div>
<svg style="position:absolute;left:68px;top:976px" width="16" height="17"><path d="M1.5 2.5H7V13.5H1.5Z" fill="#fff" stroke="#aaa"/><path d="M4.5 1.5H11L14.5 5V16.5H4.5Z" fill="#fff" stroke="#555"/><path d="M11 1.5L14.5 5" stroke="#2060d0" stroke-width="1.5"/><path d="M6 7.5h7M6 9.5h7M6 11.5h7M6 13.5h7" stroke="#9cc0e8"/></svg>
<div style="position:absolute;left:0px;top:996px;width:284px;height:1px;background:#d6d6d6"></div>

<div id="editor"></div>
<svg style="position:absolute;left:284px;top:75px" width="984" height="22"><rect x="1" y="1" width="984" height="20" fill="#f0f0f0"/><path d="M0 20.5H984" stroke="#a0a0a0"/><path d="M4.5 20.5 L20.5 4.5 H113 Q115.5 4.5 115.5 7 V20.5Z" fill="#f6f6f6" stroke="#a0a0a0"/><path d="M107 20.5 L123.5 4.5 H249 Q251.5 4.5 251.5 7 V21 H107Z" fill="#fcfcfc" stroke="#a0a0a0"/><path d="M108 21H251" stroke="#fcfcfc"/><path d="M1 21.5H984" stroke="#e4e4e4"/></svg>
<svg class="ic" style="left:305px;top:79px" width="14" height="17" viewBox="0 0 14 17"><path d="M1.5 0.5H9.5L12.5 3.5V15.5H1.5Z" fill="#fff" stroke="#222"/><path d="M2 15.5H13V4" stroke="#222" stroke-width="1.2" fill="none"/><path d="M4 5.5h6M4 7.5h6M4 9.5h6M4 11.5h6M4 13.5h6" stroke="#0000ff" stroke-width="1"/></svg>
<svg class="ic" style="left:406px;top:79px" width="17" height="18" viewBox="0 0 17 18"><path d="M0.5 3.5 L3.5 0.5 H15.5 V13.5 L12.5 16.5 H0.5Z" fill="#7a7a7a" stroke="#222"/><path d="M3.5 0.5 H15.5 L12.5 3.5 H0.5Z" fill="#d0d0d0" stroke="#444" stroke-width="0.6"/><rect x="1" y="4" width="11" height="12" fill="#c4c4c4"/><rect x="1" y="4" width="11" height="1" fill="#e01818"/><rect x="3.5" y="5" width="6" height="2" fill="#11a011"/><path d="M4 9.5h1M8 9.5h1M4 11.5h1M8 11.5h1M4 13.5h1M8 13.5h1" stroke="#555"/><path d="M0.5 3.5 H12.5 V16.5 M12.5 3.5 L15.5 0.5" stroke="#222" fill="none"/></svg>
<div style="position:absolute;left:329px;top:81px;font-size:10.8px;letter-spacing:-0.75px">PLC_PRG</div>
<div style="position:absolute;left:429px;top:81px;font-size:11px;font-weight:bold;letter-spacing:0.1px">PLC_AC500_V3</div>
<svg style="position:absolute;left:522px;top:83px" width="10" height="10"><path d="M1.5 1.5L8.5 8.5M8.5 1.5L1.5 8.5" stroke="#000" stroke-width="2.2"/></svg>
<!-- content frames -->
<div style="position:absolute;left:490px;top:103px;width:800px;height:887px;border:1px solid #a0a0a0;background:#fff"></div>
<div style="position:absolute;left:492px;top:105px;width:800px;height:883px;border:1px solid #a0a0a0;background:#fff"></div>
<div style="position:absolute;left:494px;top:140px;width:800px;height:846px;border-left:1px solid #7f9cc4;border-top:1px solid #9fb6d6;background:#fff"></div>
<!-- header -->
<div style="position:absolute;left:495px;top:141px;width:780px;height:33px;background:linear-gradient(#fefefe 0%,#fbfbfb 40%,#f2f3f5 42%,#eceef1 100%);border-bottom:1px solid #d5d5d5"></div>
<div style="position:absolute;left:495px;top:141px;width:6px;height:845px;background:#f2f2f2"></div>
<div class="vl" style="left:550px"></div>
<div class="vl" style="left:638px"></div>
<div class="vl" style="left:781px"></div>
<div class="vl" style="left:841px"></div>
<div class="vl" style="left:908px"></div>
<div class="hd" style="left:506px">Type</div>
<div class="hd" style="left:561px">Device</div>
<div style="position:absolute;left:601px;top:145px;width:28px;height:25px;border:1px solid #b4b4b4;background:linear-gradient(#f4f4f4,#e4e4e4)"></div>
<svg style="position:absolute;left:615px;top:154px" width="7" height="5"><path d="M0.5 0.5L3.5 3.5L6.5 0.5" stroke="#555" fill="none"/></svg>
<div class="hd" style="left:644px">Timestamp</div>
<div class="hd" style="left:787px">Severity</div>
<div class="hd" style="left:847px">Error Code</div>
<div class="hd" style="left:913px">Description</div>
<div class="tr" style="top:174px"><svg width="16" height="21" style="position:absolute;left:518px;top:0"><rect x="2" y="9.2" width="11.5" height="2.4" fill="#1fad47"/></svg><span style="left:554px;transform:scaleX(0.908);transform-origin:0 0">PLC_AC500_V3</span><span style="left:642px;letter-spacing:0.15px">01/01/1970 12:06:11,364</span><span style="left:785px">4</span><span style="left:846px">9</span><span style="left:912px">Battery, Device, Medium has used 80% of its spare capacity</span></div>
<div class="tr" style="top:195px"><svg width="16" height="21" style="position:absolute;left:518px;top:0"><rect x="1.6" y="9.5" width="11.6" height="2.5" fill="#ec1c24"/><rect x="6.2" y="5" width="2.6" height="11.5" fill="#ec1c24"/></svg><span style="left:554px;transform:scaleX(0.908);transform-origin:0 0">PLC_AC500_V3</span><span style="left:642px;letter-spacing:0.15px">01/01/1970 12:06:07,164</span><span style="left:785px">4</span><span style="left:846px">9</span><span style="left:912px">Battery, Device, Medium has used 80% of its spare capacity</span></div>
<div class="tr" style="top:217px"><svg width="16" height="21" style="position:absolute;left:518px;top:0"><rect x="1.6" y="9.5" width="11.6" height="2.5" fill="#ec1c24"/><rect x="6.2" y="5" width="2.6" height="11.5" fill="#ec1c24"/></svg><span style="left:554px">IO_Bus</span><span style="left:642px;letter-spacing:0.15px">01/01/1970 12:06:05,564</span><span style="left:785px">4</span><span style="left:846px">16159</span><span style="left:912px">Module 22, Configured number of modules differs from found ones</span></div>
<div class="tr" style="top:238px"><svg width="16" height="21" style="position:absolute;left:518px;top:0"><rect x="2" y="9.2" width="11.5" height="2.4" fill="#1fad47"/></svg><span style="left:554px;transform:scaleX(0.908);transform-origin:0 0">PLC_AC500_V3</span><span style="left:642px;letter-spacing:0.15px">01/01/1970 12:06:01,164</span><span style="left:785px">4</span><span style="left:846px">9</span><span style="left:912px">Battery, Device, Medium has used 80% of its spare capacity</span></div>
<div class="tr" style="top:260px"><svg width="16" height="21" style="position:absolute;left:518px;top:0"><rect x="2" y="9.2" width="11.5" height="2.4" fill="#1fad47"/></svg><span style="left:554px">IO_Bus</span><span style="left:642px;letter-spacing:0.15px">01/01/1970 12:05:59,764</span><span style="left:785px">4</span><span style="left:846px">16159</span><span style="left:912px">Module 22, Configured number of modules differs from found ones</span></div>
<div class="tr" style="top:281px"><svg width="16" height="21" style="position:absolute;left:518px;top:0"><path d="M1.3 12.4 L5.2 16 L13.4 7.6" stroke="#5aa22a" stroke-width="2.3" fill="none" stroke-linecap="round"/></svg><span style="left:554px">IO_Bus</span><span style="left:642px;letter-spacing:0.15px">01/01/1970 12:05:59,164</span><span style="left:785px">4</span><span style="left:846px">123</span><span style="left:912px">Module 22, Diagnosis text not available</span></div>
<div class="tr" style="top:303px"><svg width="16" height="21" style="position:absolute;left:518px;top:0"><rect x="1.6" y="9.5" width="11.6" height="2.5" fill="#ec1c24"/><rect x="6.2" y="5" width="2.6" height="11.5" fill="#ec1c24"/></svg><span style="left:554px;transform:scaleX(0.908);transform-origin:0 0">PLC_AC500_V3</span><span style="left:642px;letter-spacing:0.15px">01/01/1970 12:05:57,165</span><span style="left:785px">4</span><span style="left:846px">9</span><span style="left:912px">Battery, Device, Medium has used 80% of its spare capacity</span></div>
<div class="tr" style="top:324px"><svg width="16" height="21" style="position:absolute;left:518px;top:0"><rect x="1.6" y="9.5" width="11.6" height="2.5" fill="#ec1c24"/><rect x="6.2" y="5" width="2.6" height="11.5" fill="#ec1c24"/></svg><span style="left:554px">IO_Bus</span><span style="left:642px;letter-spacing:0.15px">01/01/1970 12:05:55,164</span><span style="left:785px">4</span><span style="left:846px">16159</span><span style="left:912px">Module 22, Configured number of modules differs from found ones</span></div>
<div class="tr" style="top:346px"><svg width="16" height="21" style="position:absolute;left:518px;top:0"><path d="M5 1 H10 L8.3 6.9 L13 6.9 L10.6 15.2 L11.9 15.2 L8 18.8 L5.1 15.2 L7.6 15.2 L9.2 10.6 L3 10.6 Z" fill="#d7000f"/></svg><span style="left:554px">IO_Bus</span><span style="left:642px;letter-spacing:0.15px">01/01/1970 12:05:53,964</span><span style="left:785px">4</span><span style="left:846px">123</span><span style="left:912px">Module 22, Diagnosis text not available</span></div>
<div class="tr" style="top:367px"><svg width="16" height="21" style="position:absolute;left:518px;top:0"><path d="M1.3 12.4 L5.2 16 L13.4 7.6" stroke="#5aa22a" stroke-width="2.3" fill="none" stroke-linecap="round"/></svg><span style="left:554px">IO_Bus</span><span style="left:642px;letter-spacing:0.15px">01/01/1970 12:05:53,565</span><span style="left:785px">4</span><span style="left:846px">123</span><span style="left:912px">Module 22, Diagnosis text not available</span></div>
<div class="tr" style="top:389px"><svg width="16" height="21" style="position:absolute;left:518px;top:0"><rect x="2" y="9.2" width="11.5" height="2.4" fill="#1fad47"/></svg><span style="left:554px;transform:scaleX(0.908);transform-origin:0 0">PLC_AC500_V3</span><span style="left:642px;letter-spacing:0.15px">01/01/1970 12:05:50,964</span><span style="left:785px">4</span><span style="left:846px">9</span><span style="left:912px">Battery, Device, Medium has used 80% of its spare capacity</span></div>
<div class="tr" style="top:410px"><svg width="16" height="21" style="position:absolute;left:518px;top:0"><rect x="2" y="9.2" width="11.5" height="2.4" fill="#1fad47"/></svg><span style="left:554px">IO_Bus</span><span style="left:642px;letter-spacing:0.15px">01/01/1970 12:05:49,165</span><span style="left:785px">4</span><span style="left:846px">16159</span><span style="left:912px">Module 22, Configured number of modules differs from found ones</span></div>
<div class="tr" style="top:432px"><svg width="16" height="21" style="position:absolute;left:518px;top:0"><rect x="1.6" y="9.5" width="11.6" height="2.5" fill="#ec1c24"/><rect x="6.2" y="5" width="2.6" height="11.5" fill="#ec1c24"/></svg><span style="left:554px;transform:scaleX(0.908);transform-origin:0 0">PLC_AC500_V3</span><span style="left:642px;letter-spacing:0.15px">01/01/1970 12:05:47,164</span><span style="left:785px">4</span><span style="left:846px">9</span><span style="left:912px">Battery, Device, Medium has used 80% of its spare capacity</span></div>
<div class="tr" style="top:453px"><svg width="16" height="21" style="position:absolute;left:518px;top:0"><rect x="1.6" y="9.5" width="11.6" height="2.5" fill="#ec1c24"/><rect x="6.2" y="5" width="2.6" height="11.5" fill="#ec1c24"/></svg><span style="left:554px">IO_Bus</span><span style="left:642px;letter-spacing:0.15px">01/01/1970 12:05:44,764</span><span style="left:785px">4</span><span style="left:846px">16159</span><span style="left:912px">Module 22, Configured number of modules differs from found ones</span></div>
<div class="tr" style="top:475px"><svg width="16" height="21" style="position:absolute;left:518px;top:0"><path d="M5 1 H10 L8.3 6.9 L13 6.9 L10.6 15.2 L11.9 15.2 L8 18.8 L5.1 15.2 L7.6 15.2 L9.2 10.6 L3 10.6 Z" fill="#d7000f"/></svg><span style="left:554px">IO_Bus</span><span style="left:642px;letter-spacing:0.15px">01/01/1970 12:05:43,164</span><span style="left:785px">4</span><span style="left:846px">123</span><span style="left:912px">Module 22, Diagnosis text not available</span></div>
<div class="tr" style="top:496px"><svg width="16" height="21" style="position:absolute;left:518px;top:0"><rect x="2" y="9.2" width="11.5" height="2.4" fill="#1fad47"/></svg><span style="left:554px;transform:scaleX(0.908);transform-origin:0 0">PLC_AC500_V3</span><span style="left:642px;letter-spacing:0.15px">01/01/1970 12:05:40,764</span><span style="left:785px">4</span><span style="left:846px">9</span><span style="left:912px">Battery, Device, Medium has used 80% of its spare capacity</span></div>
<div class="tr" style="top:518px"><svg width="16" height="21" style="position:absolute;left:518px;top:0"><rect x="1.6" y="9.5" width="11.6" height="2.5" fill="#ec1c24"/><rect x="6.2" y="5" width="2.6" height="11.5" fill="#ec1c24"/></svg><span style="left:554px">IO_Bus</span><span style="left:642px;letter-spacing:0.15px">01/01/1970 12:05:39,404</span><span style="left:785px">4</span><span style="left:846px">16159</span><span style="left:912px">Module 22, Configured number of modules differs from found ones</span></div>
<div class="tr" style="top:539px"><svg width="16" height="21" style="position:absolute;left:518px;top:0"><rect x="1.6" y="9.5" width="11.6" height="2.5" fill="#ec1c24"/><rect x="6.2" y="5" width="2.6" height="11.5" fill="#ec1c24"/></svg><span style="left:554px;transform:scaleX(0.908);transform-origin:0 0">PLC_AC500_V3</span><span style="left:642px;letter-spacing:0.15px">01/01/1970 12:05:36,804</span><span style="left:785px">4</span><span style="left:846px">9</span><span style="left:912px">Battery, Device, Medium has used 80% of its spare capacity</span></div>
<div class="tr" style="top:561px"><svg width="16" height="21" style="position:absolute;left:518px;top:0"><rect x="2" y="9.2" width="11.5" height="2.4" fill="#1fad47"/></svg><span style="left:554px">IO_Bus</span><span style="left:642px;letter-spacing:0.15px">01/01/1970 12:05:35,104</span><span style="left:785px">4</span><span style="left:846px">16159</span><span style="left:912px">Module 22, Configured number of modules differs from found ones</span></div>
<div class="tr" style="top:582px"><svg width="16" height="21" style="position:absolute;left:518px;top:0"><rect x="2" y="9.2" width="11.5" height="2.4" fill="#1fad47"/></svg><span style="left:554px;transform:scaleX(0.908);transform-origin:0 0">PLC_AC500_V3</span><span style="left:642px;letter-spacing:0.15px">01/01/1970 12:05:33,104</span><span style="left:785px">4</span><span style="left:846px">9</span><span style="left:912px">Battery, Device, Medium has used 80% of its spare capacity</span></div>
<div class="tr" style="top:604px"><svg width="16" height="21" style="position:absolute;left:518px;top:0"><path d="M1.3 12.4 L5.2 16 L13.4 7.6" stroke="#5aa22a" stroke-width="2.3" fill="none" stroke-linecap="round"/></svg><span style="left:554px">IO_Bus</span><span style="left:642px;letter-spacing:0.15px">01/01/1970 12:05:31,004</span><span style="left:785px">4</span><span style="left:846px">123</span><span style="left:912px">Module 22, Diagnosis text not available</span></div>
<div class="tr" style="top:625px"><svg width="16" height="21" style="position:absolute;left:518px;top:0"><path d="M5 1 H10 L8.3 6.9 L13 6.9 L10.6 15.2 L11.9 15.2 L8 18.8 L5.1 15.2 L7.6 15.2 L9.2 10.6 L3 10.6 Z" fill="#d7000f"/></svg><span style="left:554px">IO_Bus</span><span style="left:642px;letter-spacing:0.15px">01/01/1970 12:05:30,404</span><span style="left:785px">4</span><span style="left:846px">123</span><span style="left:912px">Module 22, Diagnosis text not available</span></div>
<div class="tr" style="top:647px"><svg width="16" height="21" style="position:absolute;left:518px;top:0"><rect x="1.6" y="9.5" width="11.6" height="2.5" fill="#ec1c24"/><rect x="6.2" y="5" width="2.6" height="11.5" fill="#ec1c24"/></svg><span style="left:554px">IO_Bus</span><span style="left:642px;letter-spacing:0.15px">01/01/1970 12:05:29,004</span><span style="left:785px">4</span><span style="left:846px">16159</span><span style="left:912px">Module 22, Configured number of modules differs from found ones</span></div>
<div class="tr" style="top:668px"><svg width="16" height="21" style="position:absolute;left:518px;top:0"><rect x="1.6" y="9.5" width="11.6" height="2.5" fill="#ec1c24"/><rect x="6.2" y="5" width="2.6" height="11.5" fill="#ec1c24"/></svg><span style="left:554px;transform:scaleX(0.908);transform-origin:0 0">PLC_AC500_V3</span><span style="left:642px;letter-spacing:0.15px">01/01/1970 12:05:26,804</span><span style="left:785px">4</span><span style="left:846px">9</span><span style="left:912px">Battery, Device, Medium has used 80% of its spare capacity</span></div>
<div class="tr" style="top:690px"><svg width="16" height="21" style="position:absolute;left:518px;top:0"><rect x="2" y="9.2" width="11.5" height="2.4" fill="#1fad47"/></svg><span style="left:554px">IO_Bus</span><span style="left:642px;letter-spacing:0.15px">01/01/1970 12:05:24,505</span><span style="left:785px">4</span><span style="left:846px">16159</span><span style="left:912px">Module 22, Configured number of modules differs from found ones</span></div>
<div class="tr" style="top:711px"><svg width="16" height="21" style="position:absolute;left:518px;top:0"><rect x="2" y="9.2" width="11.5" height="2.4" fill="#1fad47"/></svg><span style="left:554px;transform:scaleX(0.908);transform-origin:0 0">PLC_AC500_V3</span><span style="left:642px;letter-spacing:0.15px">01/01/1970 12:05:22,904</span><span style="left:785px">4</span><span style="left:846px">9</span><span style="left:912px">Battery, Device, Medium has used 80% of its spare capacity</span></div>
<div class="tr" style="top:733px"><svg width="16" height="21" style="position:absolute;left:518px;top:0"><path d="M1.3 12.4 L5.2 16 L13.4 7.6" stroke="#5aa22a" stroke-width="2.3" fill="none" stroke-linecap="round"/></svg><span style="left:554px">IO_Bus</span><span style="left:642px;letter-spacing:0.15px">01/01/1970 12:05:19,804</span><span style="left:785px">4</span><span style="left:846px">123</span><span style="left:912px">Module 22, Diagnosis text not available</span></div>
<div class="tr" style="top:754px"><svg width="16" height="21" style="position:absolute;left:518px;top:0"><path d="M5 1 H10 L8.3 6.9 L13 6.9 L10.6 15.2 L11.9 15.2 L8 18.8 L5.1 15.2 L7.6 15.2 L9.2 10.6 L3 10.6 Z" fill="#d7000f"/></svg><span style="left:554px">IO_Bus</span><span style="left:642px;letter-spacing:0.15px">01/01/1970 12:05:19,604</span><span style="left:785px">4</span><span style="left:846px">123</span><span style="left:912px">Module 22, Diagnosis text not available</span></div>
<div class="tr" style="top:776px"><svg width="16" height="21" style="position:absolute;left:518px;top:0"><rect x="1.6" y="9.5" width="11.6" height="2.5" fill="#ec1c24"/><rect x="6.2" y="5" width="2.6" height="11.5" fill="#ec1c24"/></svg><span style="left:554px">IO_Bus</span><span style="left:642px;letter-spacing:0.15px">01/01/1970 12:05:18,604</span><span style="left:785px">4</span><span style="left:846px">16159</span><span style="left:912px">Module 22, Configured number of modules differs from found ones</span></div>
<div class="tr" style="top:797px"><svg width="16" height="21" style="position:absolute;left:518px;top:0"><rect x="1.6" y="9.5" width="11.6" height="2.5" fill="#ec1c24"/><rect x="6.2" y="5" width="2.6" height="11.5" fill="#ec1c24"/></svg><span style="left:554px;transform:scaleX(0.908);transform-origin:0 0">PLC_AC500_V3</span><span style="left:642px;letter-spacing:0.15px">01/01/1970 12:05:16,804</span><span style="left:785px">4</span><span style="left:846px">9</span><span style="left:912px">Battery, Device, Medium has used 80% of its spare capacity</span></div>
<div class="tr" style="top:819px"><svg width="16" height="21" style="position:absolute;left:518px;top:0"><rect x="2" y="9.2" width="11.5" height="2.4" fill="#1fad47"/></svg><span style="left:554px">IO_Bus</span><span style="left:642px;letter-spacing:0.15px">01/01/1970 12:05:13,904</span><span style="left:785px">4</span><span style="left:846px">16159</span><span style="left:912px">Module 22, Configured number of modules differs from found ones</span></div>
<div class="tr" style="top:840px"><svg width="16" height="21" style="position:absolute;left:518px;top:0"><rect x="2" y="9.2" width="11.5" height="2.4" fill="#1fad47"/></svg><span style="left:554px;transform:scaleX(0.908);transform-origin:0 0">PLC_AC500_V3</span><span style="left:642px;letter-spacing:0.15px">01/01/1970 12:05:12,704</span><span style="left:785px">4</span><span style="left:846px">9</span><span style="left:912px">Battery, Device, Medium has used 80% of its spare capacity</span></div>
<div class="tr" style="top:862px"><svg width="16" height="21" style="position:absolute;left:518px;top:0"><path d="M1.3 12.4 L5.2 16 L13.4 7.6" stroke="#5aa22a" stroke-width="2.3" fill="none" stroke-linecap="round"/></svg><span style="left:554px">IO_Bus</span><span style="left:642px;letter-spacing:0.15px">01/01/1970 12:05:08,605</span><span style="left:785px">4</span><span style="left:846px">123</span><span style="left:912px">Module 22, Diagnosis text not available</span></div>
<div class="tr" style="top:883px"><svg width="16" height="21" style="position:absolute;left:518px;top:0"><rect x="1.6" y="9.5" width="11.6" height="2.5" fill="#ec1c24"/><rect x="6.2" y="5" width="2.6" height="11.5" fill="#ec1c24"/></svg><span style="left:554px">IO_Bus</span><span style="left:642px;letter-spacing:0.15px">01/01/1970 12:05:08,204</span><span style="left:785px">4</span><span style="left:846px">16159</span><span style="left:912px">Module 22, Configured number of modules differs from found ones</span></div>
<div class="tr" style="top:905px"><svg width="16" height="21" style="position:absolute;left:518px;top:0"><rect x="1.6" y="9.5" width="11.6" height="2.5" fill="#ec1c24"/><rect x="6.2" y="5" width="2.6" height="11.5" fill="#ec1c24"/></svg><span style="left:554px;transform:scaleX(0.908);transform-origin:0 0">PLC_AC500_V3</span><span style="left:642px;letter-spacing:0.15px">01/01/1970 12:05:06,804</span><span style="left:785px">4</span><span style="left:846px">9</span><span style="left:912px">Battery, Device, Medium has used 80% of its spare capacity</span></div>
<div class="tr" style="top:926px"><svg width="16" height="21" style="position:absolute;left:518px;top:0"><path d="M1.3 12.4 L5.2 16 L13.4 7.6" stroke="#5aa22a" stroke-width="2.3" fill="none" stroke-linecap="round"/></svg><span style="left:554px">IO_Bus</span><span style="left:642px;letter-spacing:0.15px">01/01/1970 12:05:03,004</span><span style="left:785px">4</span><span style="left:846px">123</span><span style="left:912px">Module 22, Diagnosis text not available</span></div>
<div class="tr" style="top:948px"><svg width="16" height="21" style="position:absolute;left:518px;top:0"><rect x="2" y="9.2" width="11.5" height="2.4" fill="#1fad47"/></svg><span style="left:554px;transform:scaleX(0.908);transform-origin:0 0">PLC_AC500_V3</span><span style="left:642px;letter-spacing:0.15px">01/01/1970 12:05:02,504</span><span style="left:785px">4</span><span style="left:846px">9</span><span style="left:912px">Battery, Device, Medium has used 80% of its spare capacity</span></div>
<div class="tr" style="top:969px"><svg width="16" height="21" style="position:absolute;left:518px;top:0"><path d="M5 1 H10 L8.3 6.9 L13 6.9 L10.6 15.2 L11.9 15.2 L8 18.8 L5.1 15.2 L7.6 15.2 L9.2 10.6 L3 10.6 Z" fill="#d7000f"/></svg><span style="left:554px">IO_Bus</span><span style="left:642px;letter-spacing:0.15px">01/01/1970 12:04:58,004</span><span style="left:785px">4</span><span style="left:846px">123</span><span style="left:912px">Module 22, Diagnosis text not available</span></div>
<div class="hl" style="top:194px"></div>
<div class="hl2" style="top:194px"></div>
<div class="hl" style="top:216px"></div>
<div class="hl2" style="top:216px"></div>
<div class="hl" style="top:237px"></div>
<div class="hl2" style="top:237px"></div>
<div class="hl" style="top:259px"></div>
<div class="hl2" style="top:259px"></div>
<div class="hl" style="top:280px"></div>
<div class="hl2" style="top:280px"></div>
<div class="hl" style="top:302px"></div>
<div class="hl2" style="top:302px"></div>
<div class="hl" style="top:323px"></div>
<div class="hl2" style="top:323px"></div>
<div class="hl" style="top:345px"></div>
<div class="hl2" style="top:345px"></div>
<div class="hl" style="top:366px"></div>
<div class="hl2" style="top:366px"></div>
<div class="hl" style="top:388px"></div>
<div class="hl2" style="top:388px"></div>
<div class="hl" style="top:409px"></div>
<div class="hl2" style="top:409px"></div>
<div class="hl" style="top:431px"></div>
<div class="hl2" style="top:431px"></div>
<div class="hl" style="top:452px"></div>
<div class="hl2" style="top:452px"></div>
<div class="hl" style="top:474px"></div>
<div class="hl2" style="top:474px"></div>
<div class="hl" style="top:495px"></div>
<div class="hl2" style="top:495px"></div>
<div class="hl" style="top:517px"></div>
<div class="hl2" style="top:517px"></div>
<div class="hl" style="top:538px"></div>
<div class="hl2" style="top:538px"></div>
<div class="hl" style="top:560px"></div>
<div class="hl2" style="top:560px"></div>
<div class="hl" style="top:581px"></div>
<div class="hl2" style="top:581px"></div>
<div class="hl" style="top:603px"></div>
<div class="hl2" style="top:603px"></div>
<div class="hl" style="top:624px"></div>
<div class="hl2" style="top:624px"></div>
<div class="hl" style="top:646px"></div>
<div class="hl2" style="top:646px"></div>
<div class="hl" style="top:667px"></div>
<div class="hl2" style="top:667px"></div>
<div class="hl" style="top:689px"></div>
<div class="hl2" style="top:689px"></div>
<div class="hl" style="top:710px"></div>
<div class="hl2" style="top:710px"></div>
<div class="hl" style="top:732px"></div>
<div class="hl2" style="top:732px"></div>
<div class="hl" style="top:753px"></div>
<div class="hl2" style="top:753px"></div>
<div class="hl" style="top:775px"></div>
<div class="hl2" style="top:775px"></div>
<div class="hl" style="top:796px"></div>
<div class="hl2" style="top:796px"></div>
<div class="hl" style="top:818px"></div>
<div class="hl2" style="top:818px"></div>
<div class="hl" style="top:839px"></div>
<div class="hl2" style="top:839px"></div>
<div class="hl" style="top:861px"></div>
<div class="hl2" style="top:861px"></div>
<div class="hl" style="top:882px"></div>
<div class="hl2" style="top:882px"></div>
<div class="hl" style="top:904px"></div>
<div class="hl2" style="top:904px"></div>
<div class="hl" style="top:925px"></div>
<div class="hl2" style="top:925px"></div>
<div class="hl" style="top:947px"></div>
<div class="hl2" style="top:947px"></div>
<div class="hl" style="top:968px"></div>
<div class="hl2" style="top:968px"></div>
<div class="hl" style="top:990px"></div>
<div class="hl2" style="top:990px"></div>
<!-- buttons -->
<div class="btn" style="left:504px;width:69px;color:#000;background:#dcdcdc;border-color:#555">Stop refresh</div>
<div class="btn" style="left:593px;width:88px">Get next entries</div>
<div class="btn" style="left:701px;width:130px;padding-left:1px">Export complete history</div>
<svg style="position:absolute;left:290px;top:102px" width="210" height="820"><path d="M1.5 1.5 H202.5 V813 L200.5 813 L1.5 783.5 Z" fill="#f0f0f0" stroke="#a0a0a0"/></svg>
<div style="position:absolute;left:292px;top:105px;width:3px;height:770px;background:#6cb8f8"></div>
<div class="st" style="top:116px">Communication Settings</div>
<div style="position:absolute;left:292px;top:140px;width:3px;height:1px;background:#e4eef8"></div>
<div style="position:absolute;left:317px;top:140px;width:149px;height:1px;background:#fff"></div>
<div class="st" style="top:151px">PLC Settings</div>
<div style="position:absolute;left:292px;top:175px;width:3px;height:1px;background:#e4eef8"></div>
<div style="position:absolute;left:317px;top:175px;width:149px;height:1px;background:#fff"></div>
<div class="st" style="top:186px">Version information</div>
<div style="position:absolute;left:292px;top:210px;width:3px;height:1px;background:#e4eef8"></div>
<div style="position:absolute;left:317px;top:210px;width:149px;height:1px;background:#fff"></div>
<div class="st" style="top:221px">Statistics</div>
<div style="position:absolute;left:292px;top:245px;width:3px;height:1px;background:#e4eef8"></div>
<div style="position:absolute;left:317px;top:245px;width:149px;height:1px;background:#fff"></div>
<div class="st" style="top:256px">Files</div>
<div style="position:absolute;left:292px;top:280px;width:3px;height:1px;background:#e4eef8"></div>
<div style="position:absolute;left:317px;top:280px;width:149px;height:1px;background:#fff"></div>
<div class="st" style="top:291px">Log</div>
<div style="position:absolute;left:292px;top:315px;width:3px;height:1px;background:#e4eef8"></div>
<div style="position:absolute;left:317px;top:315px;width:149px;height:1px;background:#fff"></div>
<div class="st" style="top:326px">PLC Shell</div>
<div style="position:absolute;left:292px;top:350px;width:3px;height:1px;background:#e4eef8"></div>
<div style="position:absolute;left:317px;top:350px;width:149px;height:1px;background:#fff"></div>
<div class="st" style="top:361px">Users and Groups</div>
<div style="position:absolute;left:292px;top:385px;width:3px;height:1px;background:#e4eef8"></div>
<div style="position:absolute;left:317px;top:385px;width:149px;height:1px;background:#fff"></div>
<div class="st" style="top:396px">Access Rights</div>
<div style="position:absolute;left:292px;top:420px;width:3px;height:1px;background:#e4eef8"></div>
<div style="position:absolute;left:317px;top:420px;width:149px;height:1px;background:#fff"></div>
<div class="st" style="top:431px">Symbol Rights</div>
<div style="position:absolute;left:292px;top:455px;width:3px;height:1px;background:#e4eef8"></div>
<div style="position:absolute;left:317px;top:455px;width:149px;height:1px;background:#fff"></div>
<div class="st" style="top:466px">PM5670-2ETH Hardware</div>
<div style="position:absolute;left:292px;top:490px;width:3px;height:1px;background:#e4eef8"></div>
<div style="position:absolute;left:317px;top:490px;width:149px;height:1px;background:#fff"></div>
<div class="st" style="top:501px">CPU-Parameters Parameters</div>
<div style="position:absolute;left:292px;top:525px;width:3px;height:1px;background:#e4eef8"></div>
<div style="position:absolute;left:317px;top:525px;width:149px;height:1px;background:#fff"></div>
<div class="st" style="top:536px">IEC Objects</div>
<div style="position:absolute;left:292px;top:560px;width:3px;height:1px;background:#e4eef8"></div>
<div style="position:absolute;left:317px;top:560px;width:149px;height:1px;background:#fff"></div>
<div class="st" style="top:571px">IO Mapping List</div>
<div style="position:absolute;left:292px;top:595px;width:3px;height:1px;background:#e4eef8"></div>
<div style="position:absolute;left:317px;top:595px;width:149px;height:1px;background:#fff"></div>
<div class="st" style="top:606px">I/O-Bus I/O Mapping</div>
<div style="position:absolute;left:292px;top:630px;width:3px;height:1px;background:#e4eef8"></div>
<div style="position:absolute;left:317px;top:630px;width:149px;height:1px;background:#fff"></div>
<div class="st" style="top:641px">Task Deployment</div>
<div style="position:absolute;left:292px;top:665px;width:3px;height:1px;background:#e4eef8"></div>
<div style="position:absolute;left:317px;top:665px;width:149px;height:1px;background:#fff"></div>
<div class="st" style="top:676px">Applications</div>
<div style="position:absolute;left:292px;top:700px;width:3px;height:1px;background:#e4eef8"></div>
<div style="position:absolute;left:317px;top:700px;width:149px;height:1px;background:#fff"></div>
<div class="st" style="top:711px">Backup and Restore</div>
<div style="position:absolute;left:292px;top:735px;width:3px;height:1px;background:#e4eef8"></div>
<div style="position:absolute;left:317px;top:735px;width:149px;height:1px;background:#fff"></div>
<div class="st" style="top:746px">Status</div>
<div style="position:absolute;left:292px;top:770px;width:3px;height:1px;background:#e4eef8"></div>
<div style="position:absolute;left:317px;top:770px;width:149px;height:1px;background:#fff"></div>
<div class="st" style="top:781px">Diagnosis</div>
<div style="position:absolute;left:291px;top:805px;width:202px;height:36px;background:#fff;border-top:1px solid #a0a0a0;border-bottom:1px solid #a0a0a0"></div>
<div style="position:absolute;left:292px;top:806px;width:3px;height:34px;background:#0066cc"></div>
<div class="st" style="top:816px">Diagnosis History</div>
<div class="st" style="top:851px">Information</div>
<div style="position:absolute;left:317px;top:875px;width:149px;height:1px;background:#fff"></div>
<!-- status -->
<div id="status">
<span style="left:614px">Device user: Anonymous</span>
<span style="left:807px">Last build:</span>
<span style="left:879px">0</span>
<span style="left:908px">0</span>
<span style="left:937px;letter-spacing:-0.4px">Precompile</span>
<span style="left:1240px">Progr</span>
</div>
<div style="position:absolute;left:574px;top:998px;width:1px;height:19px;background:#d0d0d0"></div>
<div style="position:absolute;left:775px;top:998px;width:1px;height:19px;background:#d0d0d0"></div>
<div style="position:absolute;left:1036px;top:998px;width:1px;height:19px;background:#c8c8c8"></div>
<div style="position:absolute;left:1062px;top:998px;width:1px;height:19px;background:#c8c8c8"></div>
<div style="position:absolute;left:1066px;top:999px;width:92px;height:18px;background:#90ee90"></div>
<div style="position:absolute;left:1099px;top:1001px;font-size:12px">RUN</div>
<svg style="position:absolute;left:862px;top:1001px" width="13" height="13"><circle cx="6.5" cy="6.5" r="5.5" fill="#e01818" stroke="#900" stroke-width="0.8"/><path d="M4 4L9 9M9 4L4 9" stroke="#fff" stroke-width="1.8"/></svg>
<svg style="position:absolute;left:891px;top:1001px" width="13" height="13"><circle cx="6.5" cy="6.5" r="5.5" fill="#ffee00" stroke="#333" stroke-width="0.8"/><circle cx="6.5" cy="5" r="1.6" fill="#000"/><path d="M6.5 6v4" stroke="#000" stroke-width="1.3"/></svg>
<svg style="position:absolute;left:992px;top:1001px" width="18" height="15"><path d="M2 8L6 12L15 3" stroke="#2fa82f" stroke-width="2.4" fill="none"/></svg>
<svg style="position:absolute;left:1042px;top:999px" width="16" height="16"><path d="M3.5 7V4A3 3 0 0 1 9.5 4V5" stroke="#000" stroke-width="2" fill="none"/><rect x="6" y="7" width="9" height="8" fill="#000"/><rect x="9.5" y="10" width="2" height="3" fill="#fff"/></svg>
</body></html>
